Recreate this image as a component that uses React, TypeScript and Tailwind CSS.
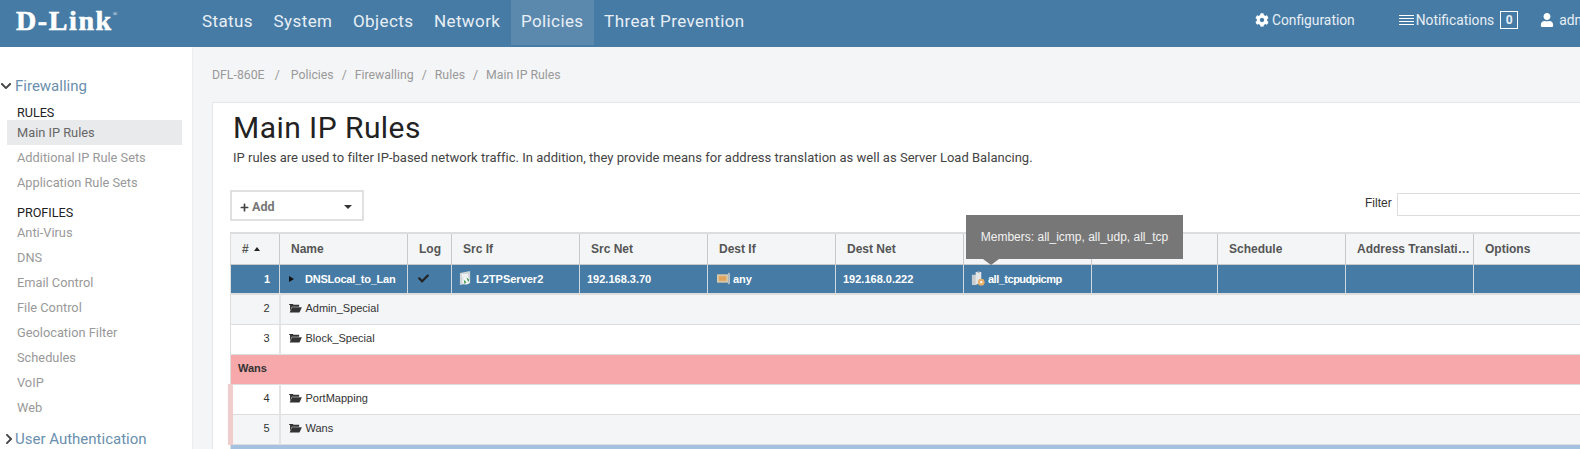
import { FaCheck, FaCog, FaUser, FaChevronDown, FaChevronRight, FaPlus } from 'react-icons/fa';

const arial = "font-['Liberation_Sans',Arial,sans-serif]";

const navItems = ['Status', 'System', 'Objects', 'Network', 'Policies', 'Threat Prevention'];
const ruleItems = ['Main IP Rules', 'Additional IP Rule Sets', 'Application Rule Sets'];
const profileItems = ['Anti-Virus', 'DNS', 'Email Control', 'File Control', 'Geolocation Filter', 'Schedules', 'VoIP', 'Web'];
const crumbs = ['DFL-860E', 'Policies', 'Firewalling', 'Rules', 'Main IP Rules'];
const columns = [
  { name: '#', width: 'w-[49px]' },
  { name: 'Name', width: 'w-[128px]' },
  { name: 'Log', width: 'w-[44px]' },
  { name: 'Src If', width: 'w-[128px]' },
  { name: 'Src Net', width: 'w-[128px]' },
  { name: 'Dest If', width: 'w-[128px]' },
  { name: 'Dest Net', width: 'w-[128px]' },
  { name: '', width: 'w-[128px]' },
  { name: '', width: 'w-[126px]' },
  { name: 'Schedule', width: 'w-[128px]' },
  { name: 'Address Translation', width: 'w-[128px]' },
  { name: 'Options', width: 'w-[160px]' },
];

function FolderOpen() {
  return (
    <svg viewBox="0 0 14 11" className="w-[13px] h-[10px] shrink-0 text-[#333]" fill="currentColor">
      <path d="M0 1h4l1 1h6v2H3L1 9V2.2H0z" />
      <path d="M3.2 4.6H14l-2.6 5.9H.6z" />
    </svg>
  );
}

function NetIcon() {
  return (
    <svg viewBox="0 0 14 16" className="w-[13px] h-[15px] shrink-0">
      <path d="M1 2l11-2v13l-11 2z" fill="#cfd4d8" />
      <rect x="3" y="3" width="7" height="4" fill="#eef0f2" />
      <circle cx="7.5" cy="10.5" r="4" fill="#f4f6f6" />
      <path d="M5 9l3 3-2 2zM8 7l3 2-1 3z" fill="#3f9a55" />
    </svg>
  );
}

function AnyIcon() {
  return (
    <svg viewBox="0 0 14 13" className="w-[13px] h-[13px] shrink-0">
      <rect x="0" y="2" width="12" height="9" fill="#d8c7a8" />
      <rect x="2" y="4" width="8" height="5" fill="#e2a35c" />
      <path d="M12 0l2 1v11l-2 1z" fill="#b9c2c9" />
    </svg>
  );
}

function ServiceIcon() {
  return (
    <svg viewBox="0 0 15 16" className="w-[14px] h-[15px] shrink-0">
      <rect x="1" y="4" width="5" height="11" fill="#c9cdd0" />
      <rect x="5" y="1" width="6" height="13" fill="#e4e6e8" />
      <rect x="7" y="0" width="2" height="2" fill="#9aa0a6" />
      <circle cx="11" cy="12" r="3.6" fill="#eab06a" />
      <circle cx="11" cy="12" r="1.2" fill="#fff" />
    </svg>
  );
}

function NameCell({ text }: { text: string }) {
  return (
    <div className="flex items-center gap-[4px] pl-[8px] text-[#333]">
      <FolderOpen />
      <span>{text}</span>
    </div>
  );
}

function GroupRow({ num, name, striped, indent }: { num: number; name: string; striped?: boolean; indent?: boolean }) {
  return (
    <tr className={`h-[30px] border-b border-[#ddd] ${striped ? 'bg-[#f4f5f7]' : 'bg-white'}`}>
      <td className={`text-right pr-[9px] pb-[2px] text-[#333] border-r-2 border-[#e2e3e5] ${indent ? 'border-l-[5px] border-l-[#f0cccc]' : ''}`}>{num}</td>
      <td colSpan={11} className="pb-[2px]">
        <NameCell text={name} />
      </td>
    </tr>
  );
}

export default function App() {
  return (
    <div className="w-[1580px] h-[449px] overflow-hidden bg-[#f4f5f7] font-['Roboto',sans-serif]">
      <header className="h-[47px] bg-[#467ba5] flex text-white">
        <div className="flex items-start w-[192px] shrink-0 pl-[16px] pt-[4px] font-['Liberation_Serif',serif] font-bold text-[28px] leading-[34px] tracking-[1.6px] [-webkit-text-stroke:0.6px_white]">
          D-Link
          <span className="mt-[6px] text-[6px] leading-[8px] tracking-normal font-normal [-webkit-text-stroke:0px]">®</span>
        </div>
        <nav className="flex w-[1063px] shrink-0 h-[45px] text-[17px] tracking-[0.4px] text-[#e8eff5] whitespace-nowrap">
          {navItems.map((item) => (
            <a key={item} className={`flex items-center pl-[10px] pr-[10.6px] pb-[2px] ${item === 'Policies' ? 'bg-[#5b89ae]' : ''}`}>
              {item}
            </a>
          ))}
        </nav>
        <div className="flex shrink-0 items-center h-[40px] text-[13.8px] text-[#e8eff5] whitespace-nowrap">
          <FaCog className="w-[14px] h-[14px] text-white mr-[3px]" />
          <span>Configuration</span>
          <svg viewBox="0 0 15 10" className="w-[15px] h-[10px] ml-[44px] mr-[2px]" stroke="#fff" strokeWidth="1">
            <path d="M0 .5h15M0 3.5h15M0 6.5h15M0 9.5h15" />
          </svg>
          <span>Notifications</span>
          <span className="ml-[6px] w-[18px] h-[18px] border border-white flex items-center justify-center text-[12px] font-bold">0</span>
          <FaUser className="w-[14px] h-[14px] text-white ml-[22px] mr-[5px]" />
          <span>admin</span>
        </div>
      </header>

      <div className="flex h-[402px]">
        <aside className="w-[193px] shrink-0 bg-white border-r border-[#eceded] pt-[28px]">
          <div className="flex items-center h-[22px] text-[15px] text-[#6a8fae]">
            <FaChevronDown className="w-[12px] h-[12px] mr-[3px] text-[#444]" />
            Firewalling
          </div>
          <div className="mt-[9px] h-[14px] leading-[14px] pl-[17px] text-[12.6px] text-[#222]">RULES</div>
          <div>
            {ruleItems.map((item) => (
              <div
                key={item}
                className={`ml-[7px] w-[175px] h-[25px] pl-[10px] leading-[25px] text-[12.8px] ${item === 'Main IP Rules' ? 'bg-[#e9eaec] text-[#666]' : 'text-[#999]'}`}
              >
                {item}
              </div>
            ))}
          </div>
          <div className="mt-[11px] h-[14px] leading-[14px] pl-[17px] text-[12.6px] text-[#222]">PROFILES</div>
          <div>
            {profileItems.map((item) => (
              <div key={item} className="ml-[7px] h-[25px] pl-[10px] leading-[25px] text-[12.8px] text-[#999]">
                {item}
              </div>
            ))}
          </div>
          <div className="flex items-center mt-[8px] h-[22px] text-[15px] text-[#6a8fae]">
            <FaChevronRight className="w-[12px] h-[12px] ml-[3px] text-[#444]" />
            User Authentication
          </div>
        </aside>

        <main className="flex-1 min-w-0 pl-[19px] pt-[20px]">
          <div className="flex h-[17px] items-center text-[12.3px] text-[#999]">
            {crumbs.map((crumb, i) => (
              <span key={crumb} className="flex">
                {i > 0 && <span className={i === 1 ? 'pl-[10px] pr-[11px]' : 'px-[8px]'}>/</span>}
                {crumb}
              </span>
            ))}
          </div>
          <section className="mt-[18px] w-[1500px] h-[400px] bg-white border-l border-t border-[#e7e7e7] pl-[17px]">
            <h1 className="pl-[3px] mt-[5px] h-[40px] leading-[40px] text-[30px] text-[#222] tracking-[0.45px]">Main IP Rules</h1>
            <p className="pl-[3px] mt-[2px] h-[16px] leading-[16px] text-[13px] tracking-[0.015px] text-[#444]">
              IP rules are used to filter IP-based network traffic. In addition, they provide means for address translation as well as Server Load Balancing.
            </p>
            <div className="flex mt-[24px] h-[31px]">
              <button className="w-[134px] h-[31px] border-2 border-[#e0e0e0] flex items-center pl-[8px] pr-[10px] pt-[3px] text-[12.5px] font-bold text-[#777]">
                <FaPlus className="w-[9px] h-[9px] mr-[3px] text-[#444]" />
                Add
                <span className="ml-auto w-0 h-0 border-x-[4px] border-x-transparent border-t-[4px] border-t-[#333]" />
              </button>
              <div className={`flex items-start ml-[1001px] ${arial} text-[12px] text-[#333]`}>
                <span className="mt-[4px]">Filter</span>
                <span className="ml-[5px] mt-[3px] w-[300px] h-[23px] border border-[#ddd]" />
              </div>
            </div>

            <div className={`relative mt-[11px] ml-[-2px] w-[1350px] ${arial} text-[11px]`}>
              <table className="table-fixed w-full border-collapse border-t-2 border-l border-[#ddd]">
                <colgroup>
                  {columns.map((col, i) => (
                    <col key={i} className={col.width} />
                  ))}
                </colgroup>
                <thead>
                  <tr className="h-[31px] bg-[#f4f5f7] text-[12px] font-bold text-[#555] text-left">
                    {columns.map((col, i) => (
                      <th key={i} className="border-r border-b border-[#c9c9c9] pl-[11px] pr-[2px] font-bold truncate">
                        {col.name}
                        {col.name === '#' && (
                          <span className="inline-block ml-[5px] mb-[2px] w-0 h-0 border-x-[3px] border-x-transparent border-b-[4px] border-b-[#222]" />
                        )}
                      </th>
                    ))}
                  </tr>
                </thead>
                <tbody>
                  <tr className="h-[30px] bg-[#467ba5] text-white font-bold border-b-2 border-[#ddd]">
                    <td className="text-right pr-[9px] border-r border-[#cfd8df]">1</td>
                    <td className="border-r border-[#cfd8df]">
                      <div className="flex items-center pl-[9px] gap-[11px]">
                        <span className="w-0 h-0 border-y-[3px] border-y-transparent border-l-[5px] border-l-[#111]" />
                        <span className="tracking-[-0.25px]">DNSLocal_to_Lan</span>
                      </div>
                    </td>
                    <td className="border-r border-[#cfd8df] pl-[10px]">
                      <FaCheck className="w-[11px] h-[11px] text-[#222]" />
                    </td>
                    <td className="border-r border-[#cfd8df] pl-[7px]">
                      <div className="flex items-center gap-[4px]">
                        <NetIcon />
                        <span>L2TPServer2</span>
                      </div>
                    </td>
                    <td className="border-r border-[#cfd8df] pl-[7px]">192.168.3.70</td>
                    <td className="border-r border-[#cfd8df] pl-[9px]">
                      <div className="flex items-center gap-[3px]">
                        <AnyIcon />
                        <span>any</span>
                      </div>
                    </td>
                    <td className="border-r border-[#cfd8df] pl-[7px]">192.168.0.222</td>
                    <td className="border-r border-[#cfd8df] pl-[7px]">
                      <div className="flex items-center gap-[3px]">
                        <ServiceIcon />
                        <span className="tracking-[-0.5px]">all_tcpudpicmp</span>
                      </div>
                    </td>
                    <td className="border-r border-[#cfd8df]" />
                    <td className="border-r border-[#cfd8df]" />
                    <td className="border-r border-[#cfd8df]" />
                    <td />
                  </tr>
                  <GroupRow num={2} name="Admin_Special" striped />
                  <GroupRow num={3} name="Block_Special" />
                  <tr className="h-[30px] bg-[#f6a8aa] border-b border-[#ddd]">
                    <td colSpan={12} className="pl-[7px] pb-[2px] font-bold text-[#333]">Wans</td>
                  </tr>
                  <GroupRow num={4} name="PortMapping" indent />
                  <GroupRow num={5} name="Wans" striped indent />
                  <tr className="h-[10px] bg-[#a4c2e0]">
                    <td colSpan={12} />
                  </tr>
                </tbody>
              </table>

              <div className="absolute left-[738px] top-[-17px] w-[217px] h-[44px] bg-[#777] text-[#f2f2f2] text-[12px] flex items-center justify-center">
                Members: all_icmp, all_udp, all_tcp
                <span className="absolute left-[17px] top-full w-0 h-0 border-x-[8px] border-x-transparent border-t-[6px] border-t-[#777]" />
              </div>
            </div>
          </section>
        </main>
      </div>
    </div>
  );
}
